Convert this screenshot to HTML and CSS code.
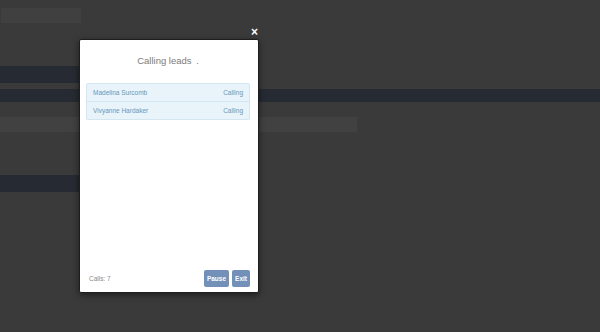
FILE: index.html
```html
<!DOCTYPE html>
<html lang="en">
<head>
  <meta charset="UTF-8">
  <title>Calling leads</title>
  <link rel="stylesheet" href="styles.css">
</head>
<body>

<div class="page">
  <div class="topbar">
    <div class="brand"></div>
  </div>
  <div class="band band-short"></div>
  <div class="band band-full"></div>
  <div class="toolbar"></div>
  <div class="band band-low"></div>
</div>

<div class="close">&times;</div>

<div class="modal">
  <h2 class="modal-title">Calling leads <span class="dots">.</span></h2>

  <ul class="lead-list">
    <li><span>Madelina Surcomb</span><span>Calling</span></li>
    <li><span>Vivyanne Hardaker</span><span>Calling</span></li>
  </ul>

  <div class="modal-footer">
    <span class="calls">Calls: 7</span>
    <div class="actions">
      <button class="btn">Pause</button>
      <button class="btn">Exit</button>
    </div>
  </div>
</div>

</body>
</html>
```

FILE: styles.css
```css
body {
  margin: 0;
  width: 600px;
  height: 332px;
  overflow: hidden;
  background: #3a3a3a;
  font-family: "Liberation Sans", Arial, sans-serif;
}

.page {
  padding-top: 8px;
}

.topbar {
  height: 15px;
  padding-left: 1px;
}

.brand {
  width: 80px;
  height: 15px;
  background: #404040;
}

.band {
  background: #262a33;
}

.band-short {
  width: 80px;
  height: 17px;
  margin-top: 43px;
}

.band-full {
  height: 13px;
  margin-top: 6px;
}

.toolbar {
  width: 357px;
  height: 15px;
  margin-top: 15px;
  background: #414141;
}

.band-low {
  width: 80px;
  height: 17px;
  margin-top: 43px;
}

.close {
  position: absolute;
  left: 251px;
  top: 25px;
  color: #fff;
  font-size: 12px;
  font-weight: bold;
  line-height: 14px;
}

.modal {
  position: absolute;
  left: 79px;
  top: 39px;
  width: 164px;
  height: 252px;
  background: #fff;
  border: 1px solid #1e1e1e;
  border-radius: 2px;
  box-shadow: 0 2px 6px rgba(0,0,0,0.5);
  display: flex;
  flex-direction: column;
  padding: 0 8px 0 6px;
}

.modal-title {
  margin: 14px 0 0;
  text-align: center;
  font-size: 9.5px;
  font-weight: normal;
  color: #7c7c7c;
  line-height: 14px;
}

.dots {
  margin-left: 2px;
}

.lead-list {
  list-style: none;
  margin: 15px 0 0;
  padding: 0;
  background: #e8f4fa;
  border: 1px solid #d3e7f1;
  border-radius: 2px;
}

.lead-list li {
  display: flex;
  justify-content: space-between;
  height: 17px;
  line-height: 17px;
  padding: 0 6px;
  font-size: 6.5px;
  color: #6797ba;
}

.lead-list li + li {
  border-top: 1px solid #d3e7f1;
}

.modal-footer {
  margin-top: auto;
  margin-bottom: 5px;
  display: flex;
  justify-content: space-between;
  align-items: center;
}

.calls {
  padding-left: 3px;
  font-size: 6.5px;
  color: #8a8a8a;
}

.actions {
  display: flex;
  gap: 3px;
}

.btn {
  height: 17px;
  padding: 0 3px;
  border: none;
  border-radius: 2px;
  background: #7290b8;
  color: #fff;
  font-family: "Liberation Sans", Arial, sans-serif;
  font-size: 6.5px;
  font-weight: bold;
}
```
